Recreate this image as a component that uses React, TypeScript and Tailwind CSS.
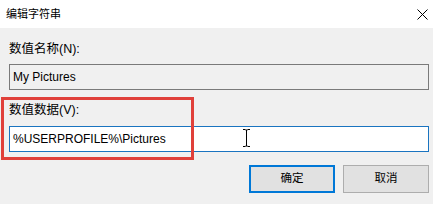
import React from "react";

export default function App() {
  const ui = { fontFamily: '"Liberation Sans", "Noto Sans CJK SC", sans-serif' };
  return (
    <div className="relative w-[433px] h-[204px] overflow-hidden bg-[#f0f0f0] text-black" style={ui}>
      <div className="h-[28px] bg-white flex items-center justify-between pl-[6px] pr-[4px]">
        <span className="text-[11px] leading-none">编辑字符串</span>
        <svg width="11" height="11" viewBox="0 0 11 11" className="mr-[1px]">
          <path d="M0.5 0.5 L10.5 10.5 M10.5 0.5 L0.5 10.5" stroke="#000" strokeWidth="1" fill="none" />
        </svg>
      </div>
      <div className="flex flex-col pl-[9px] pr-[4px] pt-[11px]">
        <div className="h-[20px] text-[12.5px] leading-[20px]">数值名称(N):</div>
        <div className="mt-[5px] h-[26px] border border-[#7a7a7a] bg-[#f0f0f0] flex items-center pl-[3px] text-[12px]">
          My Pictures
        </div>
        <div className="mt-[10px] h-[20px] text-[12.5px] leading-[20px]">数值数据(V):</div>
        <div className="relative mt-[6px] h-[26px] border border-[#1a74c0] bg-white flex items-center pl-[3px] text-[12px]">
          %USERPROFILE%\Pictures
          <svg width="7" height="18" viewBox="0 0 7 18" className="absolute left-[233px] top-[2px]">
            <path d="M0 0.5 H2.5 M4.5 0.5 H7 M3.5 1 V17 M0 17.5 H2.5 M4.5 17.5 H7 M2.5 1 H4.5 M2.5 17 H4.5" stroke="#000" strokeWidth="1" fill="none" />
          </svg>
        </div>
        <div className="mt-[13px] flex justify-end gap-[8px]">
          <button className="w-[86px] h-[28px] border-2 border-[#0078d7] bg-[#e1e1e1] text-[11.5px] flex items-center justify-center">
            确定
          </button>
          <button className="w-[86px] h-[28px] border border-[#adadad] bg-[#e1e1e1] text-[11.5px] flex items-center justify-center">
            取消
          </button>
        </div>
      </div>
      <div className="absolute left-[1px] top-[97px] w-[193px] h-[63px] border-[3px] border-[#e0403a] pointer-events-none" />
    </div>
  );
}
